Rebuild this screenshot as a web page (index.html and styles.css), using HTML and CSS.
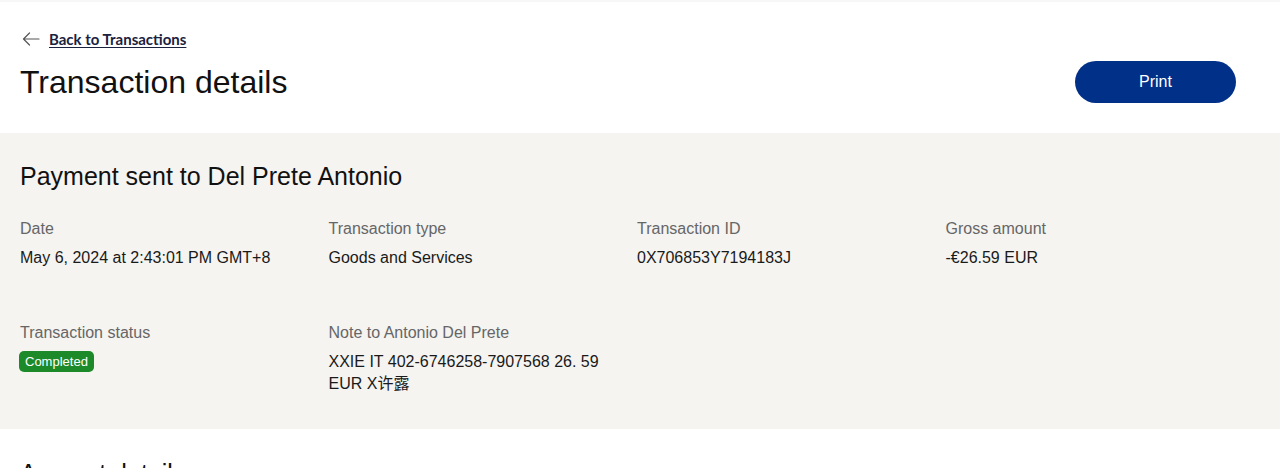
FILE: index.html
```html
<!DOCTYPE html>
<html lang="en">
<head>
<meta charset="utf-8">
<title>Transaction details</title>
<link rel="stylesheet" href="styles.css">
</head>
<body>
<header class="page-header">
  <a class="back-link" href="#">
    <svg class="back-icon" width="18" height="14" viewBox="0 0 18 14" aria-hidden="true">
      <path d="M17 7H1.5M7.5 1L1.5 7l6 6" fill="none" stroke="#555" stroke-width="1.2" stroke-linecap="round" stroke-linejoin="round"/>
    </svg>
    <span class="back-text">Back to Transactions</span>
  </a>
  <div class="title-row">
    <h1 class="page-title">Transaction details</h1>
    <button class="print-btn" type="button">Print</button>
  </div>
</header>

<section class="panel">
  <h2 class="panel-title">Payment sent to Del Prete Antonio</h2>
  <div class="details-grid">
    <div class="field">
      <div class="label">Date</div>
      <div class="value">May 6, 2024 at 2:43:01 PM GMT+8</div>
    </div>
    <div class="field">
      <div class="label">Transaction type</div>
      <div class="value">Goods and Services</div>
    </div>
    <div class="field">
      <div class="label">Transaction ID</div>
      <div class="value">0X706853Y7194183J</div>
    </div>
    <div class="field">
      <div class="label">Gross amount</div>
      <div class="value">-€26.59 EUR</div>
    </div>
    <div class="field">
      <div class="label">Transaction status</div>
      <div class="value"><span class="badge">Completed</span></div>
    </div>
    <div class="field">
      <div class="label">Note to Antonio Del Prete</div>
      <div class="value">XXIE IT 402-6746258-7907568 26. 59 EUR X许露</div>
    </div>
  </div>
</section>

<section class="amount">
  <h2 class="amount-title">Amount details</h2>
</section>
</body>
</html>
```

FILE: styles.css
```css
html, body {
  margin: 0;
  padding: 0;
  background: #ffffff;
}

body {
  font-family: "Liberation Sans", Arial, "Noto Sans CJK SC", sans-serif;
  color: #1a1a1a;
  border-top: 2px solid #f7f7f7;
}

.page-header {
  padding: 27px 44px 30px 20px;
}

.back-link {
  display: inline-flex;
  align-items: center;
  gap: 9px;
  height: 20px;
  color: #1b2240;
  text-decoration: none;
}

.back-icon {
  display: block;
  margin-left: 2px;
}

.back-text {
  font-family: Lato, "Open Sans", sans-serif;
  font-weight: 700;
  font-size: 15px;
  line-height: 20px;
  text-decoration: underline;
  text-underline-offset: 2px;
}

.title-row {
  display: flex;
  align-items: center;
  justify-content: space-between;
  margin-top: 11px;
  height: 42px;
}

.page-title {
  margin: 0;
  font-size: 32px;
  font-weight: 400;
  line-height: 40px;
  color: #111111;
}

.print-btn {
  width: 161px;
  height: 42px;
  border: none;
  border-radius: 21px;
  background: #003087;
  color: #ffffff;
  font-family: "Liberation Sans", Arial, sans-serif;
  font-size: 16px;
  cursor: pointer;
}

.panel {
  background: #f5f4f1;
  padding: 27px 43px 34px 20px;
}

.panel-title {
  margin: 0;
  font-size: 25px;
  font-weight: 400;
  line-height: 32px;
  color: #111111;
}

.details-grid {
  display: grid;
  grid-template-columns: repeat(4, 1fr);
  column-gap: 17px;
  row-gap: 52px;
  margin-top: 25px;
}

.label {
  font-size: 16px;
  line-height: 24px;
  color: #666666;
}

.value {
  margin-top: 6px;
  font-size: 16px;
  line-height: 22px;
  color: #1a1a1a;
}

.badge {
  display: inline-block;
  background: #1d8a2a;
  color: #ffffff;
  font-size: 13px;
  line-height: 21px;
  padding: 0 6px;
  border-radius: 5px;
  vertical-align: top;
  margin-left: -1px;
}

.amount {
  padding: 28px 20px 0 20px;
}

.amount-title {
  margin: 0;
  font-size: 25px;
  font-weight: 400;
  line-height: 32px;
  color: #111111;
}
```
